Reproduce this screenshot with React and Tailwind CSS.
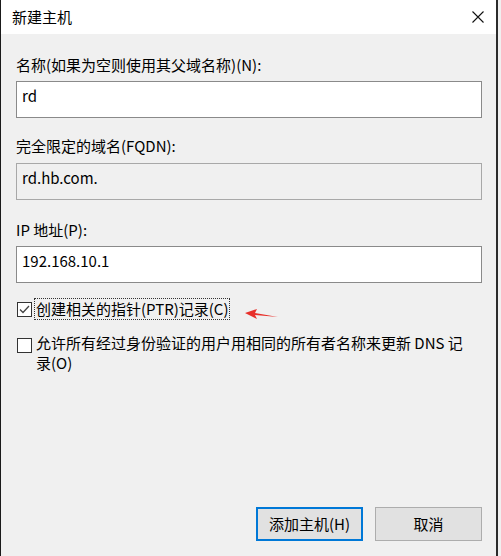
import React, { useState } from 'react';

const FONT = { fontFamily: '"Noto Sans CJK SC", "Noto Sans", sans-serif' };

function Checkbox({ checked }) {
  return (
    <svg width="15" height="15" viewBox="0 0 15 15" className="shrink-0">
      <rect x="0.5" y="0.5" width="14" height="14" fill="#ffffff" stroke="#333333" />
      {checked && (
        <path d="M3 7.5 L6 10.5 L12 4" fill="none" stroke="#444444" strokeWidth="1.3" />
      )}
    </svg>
  );
}

function Field({ value, readOnly }) {
  return (
    <div
      className={`h-[37px] w-[466px] border pl-[5px] pt-[4px] leading-[20px] ${
        readOnly ? 'bg-[#f0f0f0] border-[#a8a8a8]' : 'bg-white border-[#8a8a8a]'
      }`}
    >
      {value}
    </div>
  );
}

export default function App() {
  const [ptr, setPtr] = useState(true);
  const [allow, setAllow] = useState(false);

  return (
    <div className="w-[501px] h-[556px] bg-[#f0f0f0]">
      <div
        className="relative w-[498px] h-[556px] flex flex-col bg-[#f0f0f0] text-[15px] text-black border-l border-r-2 border-l-[#1a1a1a] border-r-[#2b2b2b]"
        style={FONT}
      >
        {/* title bar */}
        <div className="h-[34px] bg-white flex items-center justify-between pl-[11px] pr-[12px]">
          <span className="leading-[20px]">新建主机</span>
          <svg width="12" height="12" viewBox="0 0 12 12">
            <path d="M0.5 0.5 L11.5 11.5 M11.5 0.5 L0.5 11.5" stroke="#111" strokeWidth="1.1" />
          </svg>
        </div>

        <div className="flex-1 flex flex-col pl-[15px]">
          <div className="mt-[21px] leading-[20px]">名称(如果为空则使用其父域名称)(N):</div>
          <div className="mt-[6px]">
            <Field value="rd" />
          </div>

          <div className="mt-[18px] leading-[20px]">完全限定的域名(FQDN):</div>
          <div className="mt-[7px]">
            <Field value="rd.hb.com." readOnly />
          </div>

          <div className="mt-[20px] leading-[20px]">IP 地址(P):</div>
          <div className="mt-[6px]">
            <Field value="192.168.10.1" />
          </div>

          <div className="mt-[15px] flex items-center pl-[1px] cursor-default" onClick={() => setPtr(!ptr)}>
            <Checkbox checked={ptr} />
            <span className="ml-[2px] border border-dotted border-[#333] px-[1px] leading-[20px]">
              创建相关的指针(PTR)记录(C)
            </span>
          </div>

          <div className="mt-[13px] flex items-start pl-[1px] cursor-default" onClick={() => setAllow(!allow)}>
            <div className="mt-[5px]">
              <Checkbox checked={allow} />
            </div>
            <span className="ml-[4px] leading-[20px]">
              允许所有经过身份验证的用户用相同的所有者名称来更新 DNS 记
              <br />
              录(O)
            </span>
          </div>

          <div className="mt-auto mb-[15px] flex justify-end gap-[12px] pr-[14px]">
            <button className="w-[107px] h-[34px] bg-[#e1e1e1] border-2 border-[#0078d7] leading-[20px]">
              添加主机(H)
            </button>
            <button className="w-[107px] h-[34px] bg-[#e1e1e1] border border-[#adadad] leading-[20px]">
              取消
            </button>
          </div>
        </div>

        {/* annotation arrow */}
        <svg
          className="absolute left-[243px] top-[308px]"
          width="36"
          height="12"
          viewBox="0 0 36 12"
        >
          <polygon points="1,5 13,1 11,5 34,9 11,7 13,11" fill="#e8302a" />
        </svg>
      </div>
    </div>
  );
}
